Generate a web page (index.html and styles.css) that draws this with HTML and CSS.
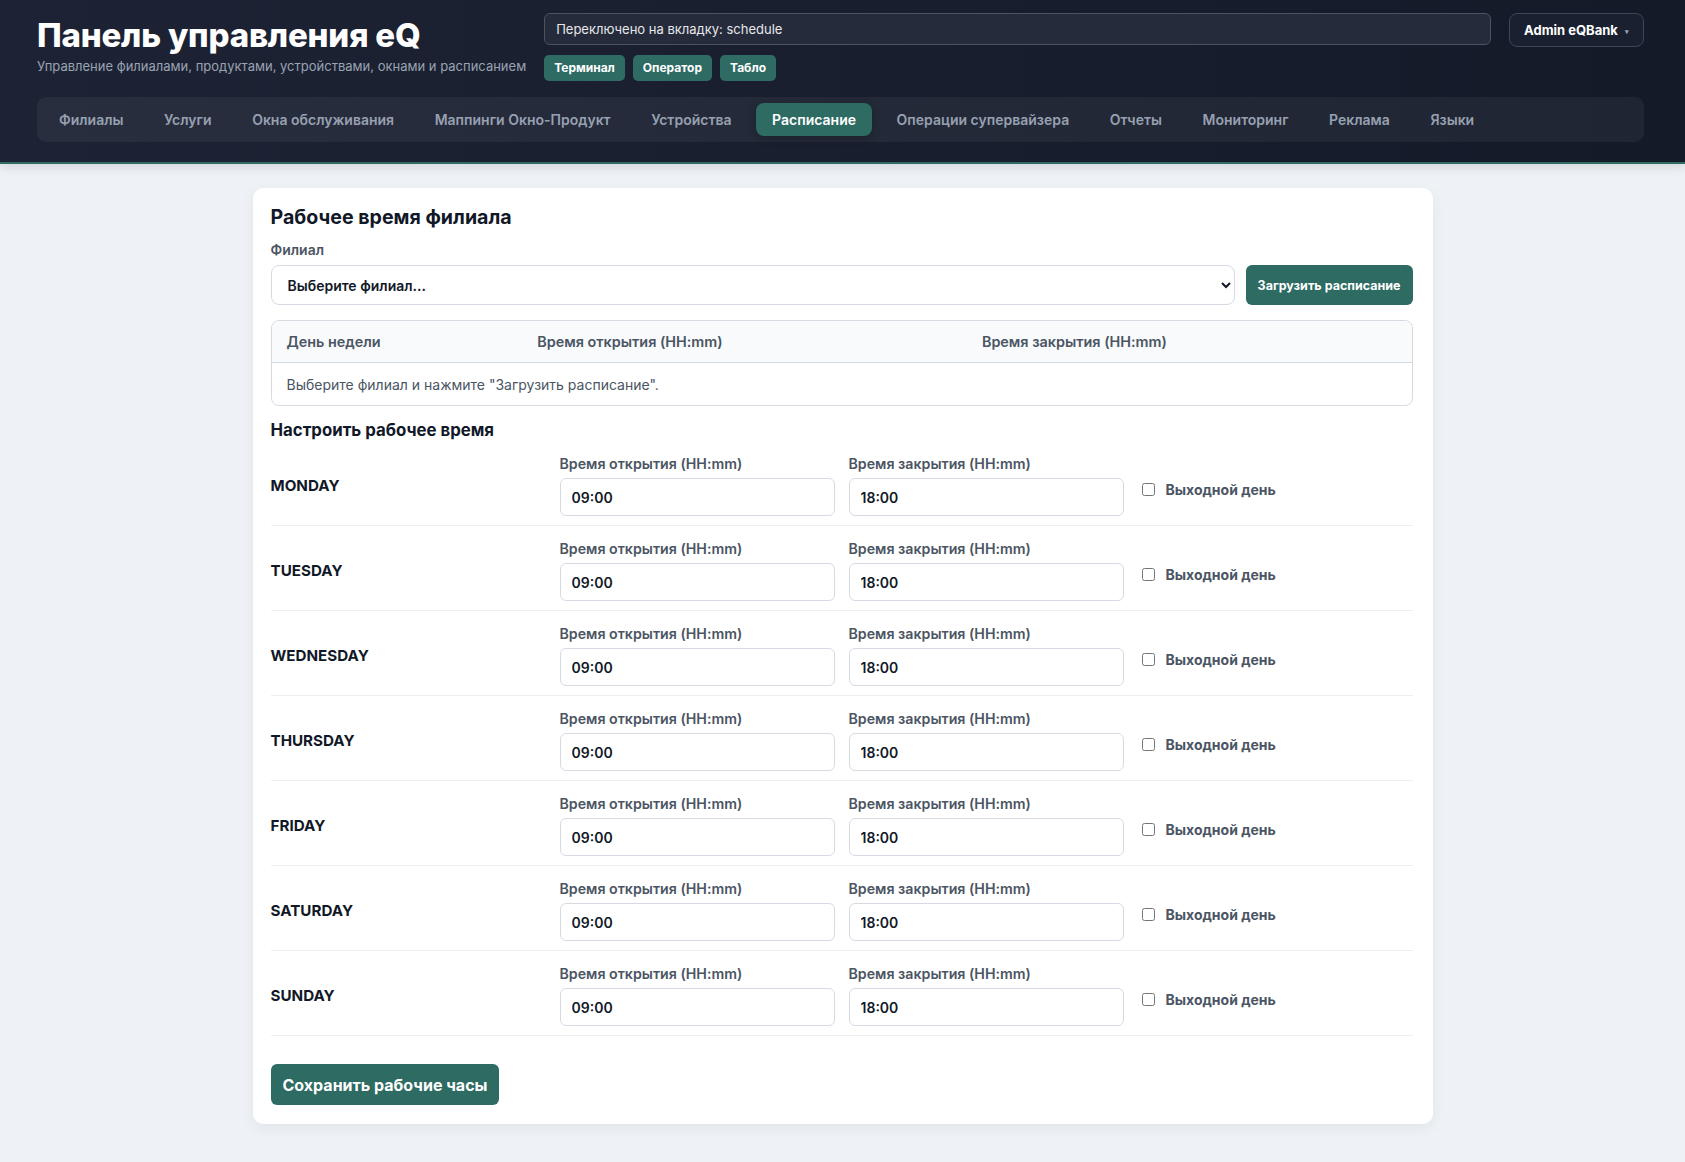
FILE: index.html
```html
<!DOCTYPE html>
<html lang="ru">
<head>
    <meta charset="UTF-8">
    <meta name="viewport" content="width=device-width, initial-scale=1.0">
    <title>Панель управления eQ</title>
    <link rel="stylesheet" href="styles.css">
</head>
<body>
    <header class="topbar">
        <div class="topbar-row">
            <div class="brand">
                <h1>Панель управления eQ</h1>
                <p>Управление филиалами, продуктами, устройствами, окнами и расписанием</p>
            </div>
            <div class="status-area">
                <div class="status-box">Переключено на вкладку: schedule</div>
                <div class="quick-links">
                    <a href="#" class="quick-btn">Терминал</a>
                    <a href="#" class="quick-btn">Оператор</a>
                    <a href="#" class="quick-btn">Табло</a>
                </div>
            </div>
            <button class="user-menu">Admin eQBank <span class="caret">▾</span></button>
        </div>

        <nav class="tabs">
            <a href="#" class="tab">Филиалы</a>
            <a href="#" class="tab">Услуги</a>
            <a href="#" class="tab">Окна обслуживания</a>
            <a href="#" class="tab">Маппинги Окно-Продукт</a>
            <a href="#" class="tab">Устройства</a>
            <a href="#" class="tab active">Расписание</a>
            <a href="#" class="tab">Операции супервайзера</a>
            <a href="#" class="tab">Отчеты</a>
            <a href="#" class="tab">Мониторинг</a>
            <a href="#" class="tab">Реклама</a>
            <a href="#" class="tab">Языки</a>
        </nav>
    </header>

    <main class="card">
        <h2>Рабочее время филиала</h2>
        <label class="field-label" for="branch">Филиал</label>
        <div class="branch-row">
            <select id="branch" class="branch-select">
                <option>Выберите филиал...</option>
            </select>
            <button class="btn-load">Загрузить расписание</button>
        </div>

        <table class="schedule-table">
            <thead>
                <tr>
                    <th class="col-day">День недели</th>
                    <th class="col-time">Время открытия (HH:mm)</th>
                    <th class="col-time">Время закрытия (HH:mm)</th>
                </tr>
            </thead>
            <tbody>
                <tr>
                    <td colspan="3" class="empty">Выберите филиал и нажмите "Загрузить расписание".</td>
                </tr>
            </tbody>
        </table>

        <h3>Настроить рабочее время</h3>

        <div class="days">
            <div class="day-row">
                <div class="day-name">MONDAY</div>
                <div class="field">
                    <label>Время открытия (HH:mm)</label>
                    <input type="text" value="09:00">
                </div>
                <div class="field">
                    <label>Время закрытия (HH:mm)</label>
                    <input type="text" value="18:00">
                </div>
                <label class="day-off"><input type="checkbox"> Выходной день</label>
            </div>
            <div class="day-row">
                <div class="day-name">TUESDAY</div>
                <div class="field">
                    <label>Время открытия (HH:mm)</label>
                    <input type="text" value="09:00">
                </div>
                <div class="field">
                    <label>Время закрытия (HH:mm)</label>
                    <input type="text" value="18:00">
                </div>
                <label class="day-off"><input type="checkbox"> Выходной день</label>
            </div>
            <div class="day-row">
                <div class="day-name">WEDNESDAY</div>
                <div class="field">
                    <label>Время открытия (HH:mm)</label>
                    <input type="text" value="09:00">
                </div>
                <div class="field">
                    <label>Время закрытия (HH:mm)</label>
                    <input type="text" value="18:00">
                </div>
                <label class="day-off"><input type="checkbox"> Выходной день</label>
            </div>
            <div class="day-row">
                <div class="day-name">THURSDAY</div>
                <div class="field">
                    <label>Время открытия (HH:mm)</label>
                    <input type="text" value="09:00">
                </div>
                <div class="field">
                    <label>Время закрытия (HH:mm)</label>
                    <input type="text" value="18:00">
                </div>
                <label class="day-off"><input type="checkbox"> Выходной день</label>
            </div>
            <div class="day-row">
                <div class="day-name">FRIDAY</div>
                <div class="field">
                    <label>Время открытия (HH:mm)</label>
                    <input type="text" value="09:00">
                </div>
                <div class="field">
                    <label>Время закрытия (HH:mm)</label>
                    <input type="text" value="18:00">
                </div>
                <label class="day-off"><input type="checkbox"> Выходной день</label>
            </div>
            <div class="day-row">
                <div class="day-name">SATURDAY</div>
                <div class="field">
                    <label>Время открытия (HH:mm)</label>
                    <input type="text" value="09:00">
                </div>
                <div class="field">
                    <label>Время закрытия (HH:mm)</label>
                    <input type="text" value="18:00">
                </div>
                <label class="day-off"><input type="checkbox"> Выходной день</label>
            </div>
            <div class="day-row">
                <div class="day-name">SUNDAY</div>
                <div class="field">
                    <label>Время открытия (HH:mm)</label>
                    <input type="text" value="09:00">
                </div>
                <div class="field">
                    <label>Время закрытия (HH:mm)</label>
                    <input type="text" value="18:00">
                </div>
                <label class="day-off"><input type="checkbox"> Выходной день</label>
            </div>
        </div>

        <button class="btn-save">Сохранить рабочие часы</button>
    </main>
</body>
</html>
```

FILE: styles.css
```css
body {
    font-family: Inter, "Noto Sans", sans-serif;
    margin: 0;
    padding: 0;
    background-color: #eef1f5;
    color: #111827;
}
.topbar {
    background: linear-gradient(90deg, #1d2334 0%, #141a28 100%);
    padding: 13px 41px 20px 37px;
    border-bottom: 2px solid #2f6b63;
    box-shadow: 0 3px 10px rgba(15, 23, 42, 0.12);
}
.topbar-row {
    display: flex;
    align-items: flex-start;
    gap: 18px;
}
.brand h1 {
    margin: 2px 0 0;
    font-size: 33px;
    line-height: 40px;
    font-weight: 800;
    color: #fff;
    letter-spacing: -0.2px;
}
.brand p {
    margin: 2px 0 0;
    font-size: 13px;
    line-height: 18px;
    color: #9aa3b2;
}
.status-area {
    flex: 1;
}
.status-box {
    height: 32px;
    box-sizing: border-box;
    display: flex;
    align-items: center;
    padding: 0 11px;
    font-size: 13px;
    color: #e5e7eb;
    background-color: #252b3a;
    border: 1px solid #4a5263;
    border-radius: 6px;
}
.quick-links {
    display: flex;
    gap: 8px;
    margin-top: 10px;
}
.quick-btn {
    display: block;
    height: 26px;
    line-height: 26px;
    padding: 0 10px;
    font-size: 12px;
    font-weight: 700;
    color: #fff;
    text-decoration: none;
    background-color: #2d6b63;
    border-radius: 5px;
}
.user-menu {
    height: 34px;
    width: 135px;
    font-family: inherit;
    font-size: 13px;
    font-weight: 700;
    color: #fff;
    background-color: #1a2030;
    border: 1px solid #3d4556;
    border-radius: 8px;
    cursor: pointer;
}
.caret {
    font-size: 7px;
    color: #9aa3b2;
    margin-left: 4px;
    vertical-align: middle;
}
.tabs {
    display: flex;
    gap: 8.6px;
    margin-top: 16px;
    padding: 6px;
    background-color: rgba(255, 255, 255, 0.05);
    border-radius: 9px;
}
.tab {
    display: block;
    padding: 0 16px;
    height: 33px;
    line-height: 33px;
    font-size: 14px;
    font-weight: 600;
    color: #97a0b1;
    text-decoration: none;
    border-radius: 8px;
}
.tab.active {
    background-color: #2d6b63;
    color: #fff;
    box-shadow: 0 2px 8px rgba(0, 0, 0, 0.25);
}
.card {
    display: block;
    max-width: 1180px;
    box-sizing: border-box;
    margin: 24px auto 20px;
    padding: 15px 20px 19px 18px;
    background-color: #fff;
    border-radius: 10px;
    box-shadow: 0 4px 14px rgba(15, 23, 42, 0.06);
}
.card h2 {
    margin: 0 0 10px;
    font-size: 19.6px;
    line-height: 28px;
    font-weight: 700;
}
.field-label {
    display: block;
    margin-bottom: 6px;
    font-size: 14px;
    line-height: 18px;
    font-weight: 600;
    color: #4b5563;
}
.branch-row {
    display: flex;
    gap: 11px;
}
.branch-select {
    flex: 1;
    height: 40px;
    padding: 0 12px;
    font-family: inherit;
    font-size: 14px;
    font-weight: 600;
    color: #111827;
    background-color: #fff;
    border: 1px solid #d6dbe3;
    border-radius: 8px;
}
.btn-load {
    height: 40px;
    padding: 0 12px;
    font-family: inherit;
    font-size: 12.5px;
    font-weight: 700;
    color: #fff;
    background-color: #2d6b63;
    border: none;
    border-radius: 6px;
    cursor: pointer;
}
.schedule-table {
    width: 100%;
    margin-top: 15px;
    border-collapse: separate;
    border-spacing: 0;
    border: 1px solid #d6dbe3;
    border-radius: 8px;
    overflow: hidden;
    font-size: 14px;
}
.schedule-table th {
    text-align: left;
    height: 41px;
    padding: 0 15px;
    font-size: 14.4px;
    font-weight: 600;
    color: #4b5563;
    background-color: #f8fafc;
    border-bottom: 1px solid #d6dbe3;
}
.col-day {
    width: 22%;
}
.col-time {
    width: 39%;
}
.schedule-table td.empty {
    height: 42px;
    padding: 0 15px;
    color: #4b5563;
}
.card h3 {
    margin: 13px 0 0;
    font-size: 16.8px;
    line-height: 22px;
    font-weight: 700;
}
.day-row {
    display: grid;
    grid-template-columns: repeat(4, 1fr);
    gap: 14px;
    padding: 14px 0 9px;
    border-bottom: 1px solid #eceff3;
}
.day-name {
    align-self: center;
    font-size: 15.2px;
    font-weight: 700;
    color: #111827;
}
.field label {
    display: block;
    margin-bottom: 5px;
    font-size: 14.2px;
    line-height: 18px;
    font-weight: 600;
    color: #4b5563;
}
.field input {
    width: 100%;
    height: 38px;
    box-sizing: border-box;
    padding: 0 11px;
    font-family: inherit;
    font-size: 14px;
    font-weight: 600;
    color: #111827;
    border: 1px solid #d6dbe3;
    border-radius: 6px;
}
.day-off {
    align-self: center;
    margin-top: 8px;
    display: flex;
    align-items: center;
    gap: 8px;
    font-size: 14px;
    font-weight: 700;
    color: #4b5563;
}
.btn-save {
    margin-top: 28px;
    height: 41px;
    padding: 0 12px;
    font-family: inherit;
    font-size: 16px;
    font-weight: 700;
    color: #fff;
    background-color: #2d6b63;
    border: none;
    border-radius: 6px;
    cursor: pointer;
}
```
